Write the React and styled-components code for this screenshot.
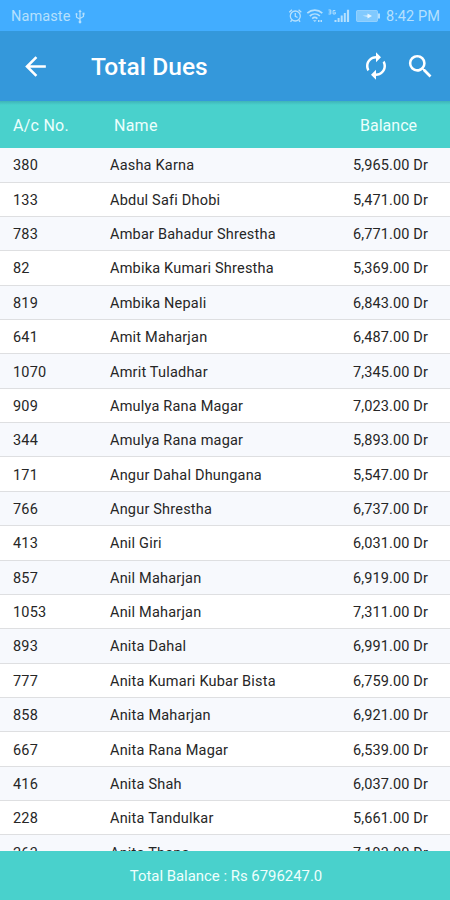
import styled, { createGlobalStyle } from "styled-components";

const GlobalStyle = createGlobalStyle`
  * {
    box-sizing: border-box;
  }
  body {
    margin: 0;
    font-family: Roboto, "Noto Sans", sans-serif;
    background-color: #fff;
  }
`;

const Screen = styled.div`
  display: flex;
  flex-direction: column;
  width: 450px;
  height: 900px;
  overflow: hidden;
`;

const StatusBar = styled.div`
  flex: none;
  display: flex;
  align-items: center;
  justify-content: space-between;
  height: 31px;
  padding: 1px 10px 0 11px;
  background-color: #42adff;
  color: #b5e0fd;
  font-size: 14.5px;
  white-space: nowrap;
  svg {
    display: block;
  }
`;

const Carrier = styled.div`
  display: flex;
  align-items: center;
  gap: 5px;
  letter-spacing: 0.1px;
`;

const StatusIcons = styled.div`
  display: flex;
  align-items: center;
`;

const Clock = styled.span`
  margin-left: 5px;
  letter-spacing: 0.1px;
`;

const AppBar = styled.header`
  flex: none;
  display: flex;
  align-items: center;
  height: 70px;
  padding: 0 14px 0 20px;
  background-color: #3498db;
  color: #fff;
  h1 {
    flex: 1;
    margin: 0 0 0 40px;
    padding-top: 1px;
    font-size: 24.5px;
    font-weight: 500;
    line-height: 28px;
    letter-spacing: 0.05px;
  }
`;

const IconButton = styled.button`
  display: flex;
  padding: 0;
  margin-left: ${(props) => props.$gap || 0}px;
  border: none;
  background: none;
  color: inherit;
  svg {
    display: block;
    fill: currentColor;
  }
`;

const TableHead = styled.div`
  flex: none;
  display: flex;
  align-items: center;
  height: 47px;
  padding: 2px 33px 0 13px;
  background: linear-gradient(#3fb4b8, #49d1cc 4px);
  color: #ecfffd;
  font-size: 16px;
  letter-spacing: 0.25px;
  span:nth-child(1) {
    width: 101px;
  }
  span:nth-child(2) {
    flex: 1;
  }
  span:nth-child(3) {
    letter-spacing: 0;
  }
`;

const List = styled.div`
  flex: 1;
  min-height: 0;
  overflow: hidden;
`;

const Row = styled.div`
  display: flex;
  align-items: center;
  height: 34.37px;
  padding: 2px 22px 0 13px;
  border-bottom: 1px solid #dedfe1;
  background-color: ${(props) => (props.$striped ? "#f7f9fd" : "#fff")};
  color: #262626;
  font-size: 14.5px;
  letter-spacing: 0.2px;
  white-space: nowrap;
  &:first-child {
    height: 34.6px;
  }
`;

const Account = styled.span`
  width: 97px;
`;

const Name = styled.span`
  flex: 1;
`;

const Balance = styled.span`
  letter-spacing: 0.12px;
`;

const Footer = styled.footer`
  flex: none;
  display: flex;
  align-items: center;
  justify-content: center;
  height: 49px;
  background-color: #49d1cc;
  color: #effffd;
  font-size: 14.9px;
  span {
    padding-left: 2px;
  }
`;

const rows = [
  ["380", "Aasha Karna", "5,965.00"],
  ["133", "Abdul Safi Dhobi", "5,471.00"],
  ["783", "Ambar Bahadur Shrestha", "6,771.00"],
  ["82", "Ambika Kumari Shrestha", "5,369.00"],
  ["819", "Ambika Nepali", "6,843.00"],
  ["641", "Amit Maharjan", "6,487.00"],
  ["1070", "Amrit Tuladhar", "7,345.00"],
  ["909", "Amulya Rana Magar", "7,023.00"],
  ["344", "Amulya Rana magar", "5,893.00"],
  ["171", "Angur Dahal Dhungana", "5,547.00"],
  ["766", "Angur Shrestha", "6,737.00"],
  ["413", "Anil Giri", "6,031.00"],
  ["857", "Anil Maharjan", "6,919.00"],
  ["1053", "Anil Maharjan", "7,311.00"],
  ["893", "Anita Dahal", "6,991.00"],
  ["777", "Anita Kumari Kubar Bista", "6,759.00"],
  ["858", "Anita Maharjan", "6,921.00"],
  ["667", "Anita Rana Magar", "6,539.00"],
  ["416", "Anita Shah", "6,037.00"],
  ["228", "Anita Tandulkar", "5,661.00"],
  ["263", "Anita Thapa", "7,193.00"],
];

const UsbIcon = () => (
  <svg width="10" height="15" viewBox="0 0 10 15" fill="none" stroke="currentColor" strokeWidth="1.2">
    <path d="M5 2v11M1.500 5v3.200L5 10.300M8.500 4.500v3L5 9.500" />
    <path d="M3.300 3L5 0.500 6.700 3z" fill="currentColor" stroke="none" />
    <circle cx="5" cy="13" r="1.400" fill="currentColor" stroke="none" />
    <circle cx="1.500" cy="5" r="1" fill="currentColor" stroke="none" />
    <path d="M7.500 3.700h2v2h-2z" fill="currentColor" stroke="none" />
  </svg>
);

// alarm, wifi, mobile signal and charging battery
const SystemIcons = () => (
  <svg width="93" height="18" viewBox="288 7 93 18" fill="none" stroke="currentColor" strokeWidth="1.3">
    <circle cx="295.300" cy="16" r="5" />
    <path d="M295.300 13v3.300l2.300 1.200M289.300 12.200l2.700-2.500M301.300 12.200l-2.700-2.500M291.800 20.200l-1.300 1.500M298.800 20.200l1.300 1.500" />
    <path d="M307.300 13.200c4.400-4 10.600-4 15 0M309.800 16c3-2.700 7.200-2.700 10.100 0M312.200 18.600c1.600-1.400 3.600-1.400 5.200 0" strokeWidth="1.700" />
    <path d="M313 20.300l1.800 1.800 1.800-1.800z" fill="currentColor" stroke="none" />
    <path d="M318 20h1.500v2h-1.500zM320.500 20h1.500v2h-1.500z" fill="currentColor" stroke="none" />
    <path d="M328.500 10h2.300v4h-2.300M328.800 12h2M335.300 10.500h-2.200v3.500h2.200v-1.800h-1" strokeWidth="1" />
    <path d="M334.500 20h2v2h-2zM337.600 18h2v4h-2zM340.700 15.500h2v6.500h-2zM343.800 13h2v9h-2zM346.900 9.800h2.200v12.200h-2.200z" fill="currentColor" stroke="none" />
    <rect x="356.500" y="10.500" width="21" height="11" rx="1" fill="currentColor" fillOpacity="0.550" strokeOpacity="0.600" strokeWidth="1" />
    <path d="M378 13.500h2v5h-2z" fill="currentColor" stroke="none" />
    <path d="M362.500 15.800l5-.2v-2.200l4.500 2.700-4.500 2.400v-1.700z" fill="#e4f5ff" stroke="none" />
  </svg>
);

const App = () => {
  return (
    <>
      <GlobalStyle />
      <Screen>
        <StatusBar>
          <Carrier>
            <span>Namaste</span>
            <UsbIcon />
          </Carrier>
          <StatusIcons>
            <SystemIcons />
            <Clock>8:42 PM</Clock>
          </StatusIcons>
        </StatusBar>
        <AppBar>
          <IconButton aria-label="Back">
            <svg width="31" height="31" viewBox="0 0 24 24">
              <path d="M20 11H7.830l5.590-5.590L12 4l-8 8 8 8 1.410-1.410L7.830 13H20v-2z" />
            </svg>
          </IconButton>
          <h1>Total Dues</h1>
          <IconButton aria-label="Refresh">
            <svg width="30" height="30" viewBox="0 0 24 24">
              <path d="M12 6v3l4-4-4-4v3c-4.420 0-8 3.580-8 8 0 1.570.460 3.030 1.240 4.260L6.700 14.800A5.870 5.870 0 0 1 6 12c0-3.310 2.690-6 6-6zm6.760 1.740L17.300 9.200c.440.840.700 1.790.700 2.800 0 3.310-2.690 6-6 6v-3l-4 4 4 4v-3c4.420 0 8-3.580 8-8 0-1.570-.460-3.030-1.240-4.260z" />
            </svg>
          </IconButton>
          <IconButton aria-label="Search" $gap={14}>
            <svg width="31" height="31" viewBox="0 0 24 24">
              <path d="M15.500 14h-.790l-.280-.270A6.471 6.471 0 0 0 16 9.500 6.500 6.500 0 1 0 9.500 16c1.610 0 3.090-.590 4.230-1.570l.270.280v.790l5 4.990L20.490 19l-4.990-5zm-6 0C7.010 14 5 11.990 5 9.500S7.010 5 9.500 5 14 7.010 14 9.500 11.990 14 9.500 14z" />
            </svg>
          </IconButton>
        </AppBar>
        <TableHead>
          <span>A/c No.</span>
          <span>Name</span>
          <span>Balance</span>
        </TableHead>
        <List>
          {rows.map(([account, name, balance], index) => (
            <Row key={account} $striped={index % 2 === 0}>
              <Account>{account}</Account>
              <Name>{name}</Name>
              <Balance>{balance} Dr</Balance>
            </Row>
          ))}
        </List>
        <Footer>
          <span>Total Balance : Rs 6796247.0</span>
        </Footer>
      </Screen>
    </>
  );
};

export default App;
